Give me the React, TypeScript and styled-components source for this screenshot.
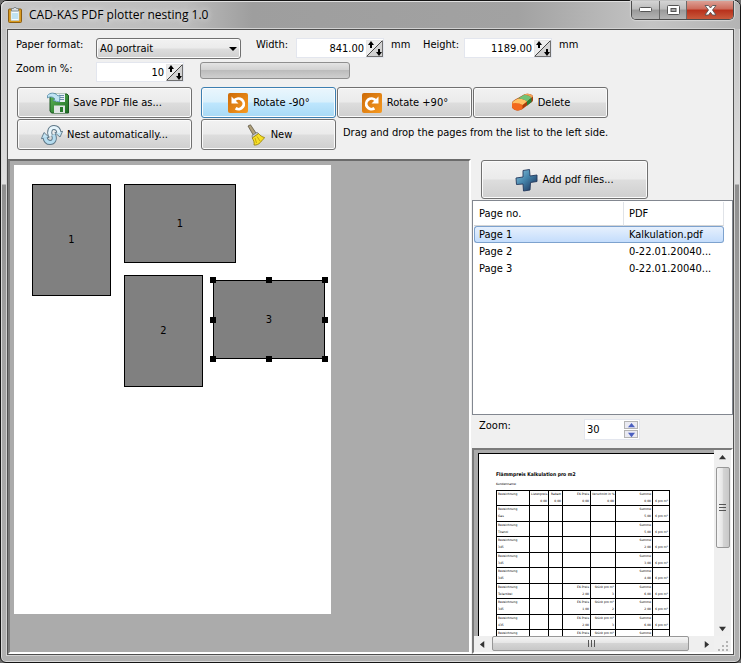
import React from "react";
import styled, { createGlobalStyle, css } from "styled-components";

const GlobalStyle = createGlobalStyle`
  * { box-sizing: border-box; }
  html, body, #root { height: 100%; margin: 0; }
  body { background: #6f6f6f; overflow: hidden; }
  body, button, input, select, table {
    font-family: "DejaVu Sans Condensed", "Noto Sans", sans-serif;
    font-size: 11px;
    line-height: 14px;
    color: #000;
  }
  button { padding: 0; margin: 0; }
`;

const Frame = styled.div`
  height: 100vh;
  min-height: 480px;
  display: flex;
  flex-direction: column;
  border: 1px solid #151515;
  border-radius: 7px 7px 6px 6px;
  padding: 0 6px 7px;
  background:
    linear-gradient(#bdbdbd, #e0e0e0 183px, #8f8f8f 184px, #a2a2a2 50%, #b0b0b0 100%);
  box-shadow: inset 0 0 0 1px #d8d8d8;
`;

const TitleBar = styled.header`
  display: flex;
  align-items: flex-start;
  height: 28px;
  margin: 0 -6px;
  padding-left: 6px;
  border-radius: 6px 6px 0 0;
  background: linear-gradient(90deg, #c6c6c6, #bcbcbc 25%, #9e9e9e 34%, #a2a2a2 70%, #c4c4c4 88%, #b4b4b4);
  box-shadow: inset 1px 1px 0 #e0e0e0;
`;

const Title = styled.h1`
  flex: 1;
  margin: 6px 0 0 6px;
  font: 12px/16px "Open Sans", "Noto Sans", sans-serif;
  text-shadow: 0 0 6px #fff;
`;

const TitleIcon = styled.svg`
  width: 16px;
  height: 16px;
  margin-top: 6px;
`;

const WindowButtons = styled.div`
  display: flex;
  height: 19px;
  margin-right: 6px;
  border: 1px solid #4c4c4c;
  border-top: 0;
  border-radius: 0 0 5px 5px;
  overflow: hidden;
  box-shadow: 0 0 1px 1px #d6d6d6;
`;

const WindowButton = styled.button<{ $close?: boolean }>`
  width: ${(p) => (p.$close ? 47 : 27)}px;
  display: grid;
  place-items: center;
  border: 0;
  background: ${(p) =>
    p.$close
      ? "linear-gradient(#dca095, #cd6a5a 45%, #b8301b 50%, #c95a3c)"
      : "linear-gradient(#d4d4d4, #bcbcbc 45%, #9a9a9a 50%, #b4b4b4)"};
  & + & { border-left: 1px solid #6a6a6a; }
`;

const Client = styled.main`
  flex: 1;
  min-height: 0;
  display: flex;
  flex-direction: column;
  border: 1px solid #4f4f4f;
  outline: 1px solid #d2d2d2;
  background: #f0f0f0;
`;

const Toolbar = styled.section`
  display: flex;
  flex-direction: column;
  padding: 8px 8px 9px;
`;

const FormRow = styled.div`
  display: flex;
  align-items: flex-start;
  height: 24px;
`;

const Label = styled.label<{ $width: number }>`
  flex: none;
  width: ${(p) => p.$width}px;
  white-space: nowrap;
`;

const Unit = styled.span`
  width: 39px;
  padding-left: 7px;
`;

const bevel = css`
  border: 1px solid #707070;
  border-radius: 3px;
  box-shadow: inset 0 0 0 1px #fbfbfb;
  background: linear-gradient(#f2f2f2, #ebebeb 48%, #dddddd 52%, #cfcfcf);
`;

const SelectWrap = styled.span`
  position: relative;
  width: 145px;
  margin-right: 15px;
  svg {
    position: absolute;
    right: 4px;
    top: 9px;
    pointer-events: none;
  }
`;

const Select = styled.select`
  ${bevel}
  appearance: none;
  display: block;
  width: 100%;
  height: 21px;
  padding: 1px 3px 0;
`;

const SpinField = styled.span`
  display: flex;
  align-items: center;
  width: 88px;
  height: 20px;
  border: 1px solid #e3e6ee;
  background: #fff;
`;

const SpinInput = styled.input`
  flex: 1;
  min-width: 0;
  height: 18px;
  padding: 0 2px;
  border: 0;
  outline: 0;
  background: transparent;
  text-align: right;
`;

const DiagonalSpin = styled.span`
  display: flex;
  width: 17px;
  height: 17px;
  border: 1px solid;
  border-color: #e6e6e6 #707070 #707070 #e6e6e6;
  background: linear-gradient(135deg, #ececec 48%, #444 48%, #444 53%, #d2d2d2 53%);
`;

const SpinArrow = styled.button<{ $down?: boolean }>`
  width: 8px;
  height: 15px;
  display: flex;
  justify-content: center;
  align-items: ${(p) => (p.$down ? "flex-end" : "flex-start")};
  border: 0;
  background: transparent;
`;

const Progress = styled.div`
  width: 150px;
  height: 17px;
  margin: 0 0 0 16px;
  border: 1px solid #8f8f8f;
  border-radius: 3px;
  background: linear-gradient(#e4e4e4, #d2d2d2 45%, #bcbcbc 50%, #cfcfcf);
`;

const ButtonRow = styled.div`
  display: flex;
  gap: 1px;
  padding-left: 1px;
  margin-top: 1px;
`;

const PushButton = styled.button<{ $wide?: boolean; $hot?: boolean }>`
  ${bevel}
  display: flex;
  align-items: center;
  justify-content: center;
  gap: 4px;
  flex: none;
  width: ${(p) => (p.$wide ? 175 : 135)}px;
  height: 31px;
  margin-right: ${(p) => (p.$wide ? 8 : 0)}px;
  ${(p) =>
    p.$hot &&
    css`
      border-color: #3c7fb1;
      background: linear-gradient(#eaf6fd, #d9f0fc 48%, #bee6fd 52%, #a7d9f5);
    `}
  svg { flex: none; }
`;

const AddButton = styled(PushButton)`
  width: 167px;
  height: 39px;
  margin: 1px 0 1px 9px;
`;

const Hint = styled.p`
  margin: 7px 0 0 6px;
`;

const Workspace = styled.div`
  flex: 1;
  min-height: 0;
  display: grid;
  grid-template-columns: minmax(0, 1fr) 262px;
`;

const Canvas = styled.section`
  overflow: hidden;
  padding: 4px;
  border: 2px solid;
  border-color: #6b6b6b #fff #fff #7b7b7b;
  background: #ababab;
`;

const Paper = styled.div`
  position: relative;
  width: 317px;
  height: 449px;
  background: #fff;
`;

const Sheet = styled.div<{ $x: number; $y: number; $landscape?: boolean }>`
  position: absolute;
  left: ${(p) => p.$x}px;
  top: ${(p) => p.$y}px;
  width: ${(p) => (p.$landscape ? 112 : 79)}px;
  height: ${(p) => (p.$landscape ? 79 : 112)}px;
  display: grid;
  place-items: center;
  box-shadow: inset 0 0 0 1px #000;
  background: #808080;
`;

const Handle = styled.span<{ $x: number; $y: number }>`
  position: absolute;
  left: ${(p) => p.$x}%;
  top: ${(p) => p.$y}%;
  width: 6px;
  height: 6px;
  margin: -3px;
  background: #000;
`;

const Side = styled.aside`
  display: flex;
  flex-direction: column;
  min-height: 0;
  padding-left: 1px;
`;

const ListBox = styled.div`
  flex: 215 1 0;
  min-height: 0;
  overflow: hidden;
  padding: 1px;
  border: 1px solid #828790;
  background: #fff;
`;

const PageTable = styled.table`
  width: 250px;
  table-layout: fixed;
  border-collapse: separate;
  border-spacing: 0;
  th, td {
    padding: 0 5px;
    text-align: left;
    font-weight: normal;
    white-space: nowrap;
  }
  th {
    height: 24px;
    border-right: 1px solid #e0e3e8;
    border-bottom: 1px solid #d5d5d5;
  }
  td { height: 17px; }
`;

const PageRow = styled.tr<{ $selected?: boolean }>`
  ${(p) =>
    p.$selected &&
    css`
      td {
        border: 1px solid #7da2ce;
        border-width: 1px 0;
        background: linear-gradient(#e6f0fd, #c4ddfc);
      }
      td:first-child { border-left-width: 1px; border-radius: 3px 0 0 3px; padding-left: 4px; }
      td:last-child { border-right-width: 1px; border-radius: 0 3px 3px 0; }
    `}
`;

const ZoomRow = styled.div`
  display: flex;
  height: 33px;
  padding: 4px 7px;
`;

const SmallSpin = styled.span`
  display: flex;
  align-items: center;
  width: 56px;
  height: 21px;
  margin-left: 1px;
  border: 1px solid #e3e6ee;
  background: #fff;
`;

const SmallSpinInput = styled(SpinInput)`
  text-align: left;
`;

const SpinStack = styled.span`
  display: grid;
  gap: 1px;
  margin-right: 1px;
`;

const StackButton = styled.button`
  width: 14px;
  height: 8px;
  display: grid;
  place-items: center;
  border: 1px solid #b4b4b4;
  background: #eaeaf2;
`;

const Preview = styled.section`
  flex: 206 1 0;
  min-height: 0;
  overflow: hidden;
  display: grid;
  grid-template-columns: minmax(0, 1fr) 17px;
  grid-template-rows: minmax(0, 1fr) 16px;
  border: 2px solid;
  border-color: #7b7b7b #fff #fff #7b7b7b;
  background: #f0f0f0;
`;

const PreviewView = styled.div`
  overflow: hidden;
  padding: 3px 0 0 4px;
  background: #ababab;
`;

const PreviewPage = styled.article`
  height: 400px;
  padding: 16px 0 0 17px;
  border: solid #000;
  border-width: 1px 0 0 1px;
  background: #fff;
  h2 {
    margin: 0;
    font: bold 5px/8px "DejaVu Sans Condensed", sans-serif;
  }
  p {
    margin: 3px 0 2px;
    font: 3px/7px "DejaVu Sans", sans-serif;
  }
`;

const Calc = styled.table`
  width: 173px;
  table-layout: fixed;
  border-collapse: collapse;
  td {
    height: 15px;
    padding: 0 1px;
    border: 1px solid #000;
    font: 3px/7px "DejaVu Sans", sans-serif;
    text-align: right;
    white-space: pre;
    vertical-align: top;
  }
  tr:nth-child(even) td { height: 16px; }
  td:first-child { text-align: left; }
`;

const Bar = styled.div<{ $horizontal?: boolean }>`
  display: flex;
  flex-direction: ${(p) => (p.$horizontal ? "row" : "column")};
  min-width: 0;
  min-height: 0;
  background: #efefef;
`;

const BarArrow = styled.button`
  flex: none;
  width: 16px;
  height: 16px;
  display: grid;
  place-items: center;
  border: 0;
  background: transparent;
`;

const Thumb = styled.div<{ $horizontal?: boolean }>`
  display: grid;
  place-items: center;
  border: 1px solid #979797;
  border-radius: 2px;
  ${(p) =>
    p.$horizontal
      ? css`
          flex: 0 1 197px;
          margin: 0 0 1px 2px;
          background: linear-gradient(#f5f5f5, #e6e6e6 45%, #d4d4d4 50%, #c8c8c8);
        `
      : css`
          flex: 0 1 81px;
          margin: 1px 1px 0 2px;
          background: linear-gradient(90deg, #f5f5f5, #e6e6e6 45%, #d4d4d4 50%, #c8c8c8);
        `}
`;

const BarGap = styled.div`
  flex: 1;
`;

const Grip = () => (
  <svg width="18" height="16" viewBox="0 0 18 16" aria-hidden="true">
    <path fill="#b4b4b4" d="M12 5h2v2h-2zM8 9h2v2H8zM12 9h2v2h-2zM4 13h2v2H4zM8 13h2v2H8zM12 13h2v2h-2z" />
  </svg>
);

const Arrow = ({ dir, color = "#333" }: { dir: "up" | "down" | "left" | "right"; color?: string }) => {
  const d = {
    up: "M0 6 4 1l4 5z",
    down: "M0 2h8L4 7z",
    left: "M6 0v8L1 4z",
    right: "M2 0v8l5-4z",
  }[dir];
  return (
    <svg width="7" height="7" viewBox="0 0 8 8" aria-hidden="true">
      <path d={d} fill={color} />
    </svg>
  );
};

const SolidArrow = ({ down }: { down?: boolean }) => (
  <svg width="8" height="8" viewBox="0 0 8 8" aria-hidden="true">
    <path d={down ? "M3 1h2v3h2L4 8 1 4h2z" : "M3 7h2V4h2L4 0 1 4h2z"} />
  </svg>
);

const ClipboardIcon = () => (
  <TitleIcon viewBox="0 0 16 16" aria-hidden="true">
    <rect x="1.500" y="2" width="13" height="13.500" rx="1" fill="#d99a1e" stroke="#8a5d12" />
    <path d="M4 4h8v9.500H4z" fill="#f4fbff" stroke="#b6c8d2" strokeWidth=".6" />
    <path d="M5 6h6v6H5z" fill="#bfe2f3" />
    <path d="M4.500 1.500h2l.5-1h2l.5 1h2V4h-7z" fill="#d8dde0" stroke="#68737a" strokeWidth=".7" />
  </TitleIcon>
);

const SaveIcon = () => (
  <svg width="22" height="22" viewBox="0 0 22 22" aria-hidden="true">
    <defs>
      <linearGradient id="disk" x1="0" y1="0" x2="1" y2="1">
        <stop offset="0" stopColor="#5fb65a" />
        <stop offset="1" stopColor="#1c6d20" />
      </linearGradient>
    </defs>
    <path d="M3 2h17l1.500 1.500V21H4.500L3 19z" fill="url(#disk)" stroke="#1b5720" />
    <path d="M9 1.500h9V10H9z" fill="#e9f1f6" />
    <path d="M12 3.500h5M12 5.500h5M12 7.500h5" stroke="#6e8ea8" />
    <path d="M7 13.500h11V21H7z" fill="#dfe5e4" />
    <path d="M13 15h3v5h-3z" fill="#277a2b" />
    <path d="M.5 3.500C3 .3 8 .2 11 4l2-1-.5 7L6 8.500 8 7C6 4.800 3 4.200.5 6z" fill="#bfe3f2" stroke="#4f87a4" strokeWidth=".8" />
  </svg>
);

const RefreshIcon = () => (
  <svg width="22" height="22" viewBox="0 0 22 22" aria-hidden="true">
    <g fill="none" stroke="#5d7686" strokeWidth="5">
      <path d="M9.500 12C7.500 7 9.500 3.500 13 3.500c3 0 4.500 2 5 5" />
      <path d="M12.500 10.500c2 5 0 8-3.500 8-3 0-4.500-2-5-5" />
    </g>
    <g fill="#c3e4f3" stroke="#5d7686" strokeWidth=".9" strokeLinejoin="round">
      <path d="M13.800 8.600 21.600 7.300 19 13z" />
      <path d="M8.200 13.400.4 14.700 3 8.500z" />
    </g>
    <g fill="none" strokeWidth="3.200">
      <path d="M9.500 12C7.500 7 9.500 3.500 13 3.500c3 0 4.500 2 5 5.500" stroke="#e6f5fc" />
      <path d="M12.500 10.500c2 5 0 8-3.500 8-3 0-4.500-2-5-5.500" stroke="#b5dcef" />
    </g>
  </svg>
);

const RotateIcon = ({ clockwise }: { clockwise?: boolean }) => (
  <svg width="22" height="22" viewBox="0 0 22 22" aria-hidden="true">
    <defs>
      <linearGradient id="orange" x1="0" y1="0" x2="1" y2="1">
        <stop offset="0" stopColor="#cc6a08" />
        <stop offset="1" stopColor="#f79a20" />
      </linearGradient>
    </defs>
    <rect x="1" y="1" width="20" height="20" rx="2" fill="url(#orange)" />
    <g transform={clockwise ? "translate(22 0) scale(-1 1)" : undefined}>
      <path d="M7.500 8.300A5.300 5.300 0 1 1 8.600 16.300" fill="none" stroke="#fff" strokeWidth="2.800" />
      <path d="M4.500 4.500v7H11.500z" fill="#fff" />
    </g>
  </svg>
);

const BroomIcon = () => (
  <svg width="22" height="22" viewBox="0 0 22 22" aria-hidden="true">
    <path d="M3 2 5.500.8l6 9-3 1.700z" fill="#b0a17c" stroke="#5f5844" strokeWidth=".8" />
    <path d="M7 11.500 12 8.300l2 1.700-6.500 4.500z" fill="#c9ccd0" stroke="#666a70" strokeWidth=".7" />
    <path d="m7.200 14 6.300-4.500c1.500 2 4 3.600 6 4-1 2-2.500 2.600-4 4.800-2 2.200-4 3-6.500 2.700.7-2-.5-5-1.800-7z" fill="#f7df25" stroke="#9a830b" strokeWidth=".9" />
    <path d="m10 14 1.500 5M12 12.500l3 4.500" stroke="#c5a60f" fill="none" />
  </svg>
);

const EraserIcon = () => (
  <svg width="23" height="22" viewBox="0 0 23 22" aria-hidden="true">
    <path d="M1 11.500C1 9 4 7.500 7 6l6-3.500C16 1 21.500 2 22 4.500V8c0 1.500-1 2-3 3.300L11.500 17C8 19.500 2 18.500 1 15z" fill="#a83d0c" />
    <path d="M1 11.500c2-1.500 8-.5 10.500 1.500v4C8 19.500 2 18.500 1 15z" fill="#f2691d" />
    <path d="M1 11.500C1.500 9.500 4 8 7 6.500c3 0 7 .8 9 3L11.500 13C9 11 3.500 10.300 1 11.500z" fill="#ffc164" />
    <path d="m7 6.500 6-3.800c3 0 6 1 7.500 3L16 9.500c-2-2-6-3-9-3z" fill="#72c275" />
    <path d="M16 9.500 20.500 5.700V10L16 13.700z" fill="#25823b" />
    <path d="M13 2.700C16 1 21 2 22 4.500l-1.500 1.200c-1.500-2-4.500-3-7.500-3z" fill="#f0a45a" />
  </svg>
);

const PlusIcon = () => (
  <svg width="23" height="24" viewBox="0 0 23 24" aria-hidden="true">
    <defs>
      <linearGradient id="plus" x1="0" y1="0" x2="1" y2="1">
        <stop offset="0" stopColor="#8fc7df" />
        <stop offset=".45" stopColor="#4585ac" />
        <stop offset="1" stopColor="#14254d" />
      </linearGradient>
    </defs>
    <path d="M8 2.500 14.500 1.500 15 8l7-1v6.500l-6.500 1L15 22l-6.500 1L8 16l-6.500.5L1 10l7-1z" fill="url(#plus)" stroke="#24395c" strokeWidth=".9" />
  </svg>
);

const Spin = ({ id, value }: { id: string; value: string }) => (
  <SpinField>
    <SpinInput id={id} defaultValue={value} />
    <DiagonalSpin>
      <SpinArrow aria-label="Increase"><SolidArrow /></SpinArrow>
      <SpinArrow $down aria-label="Decrease"><SolidArrow down /></SpinArrow>
    </DiagonalSpin>
  </SpinField>
);

const calcRows: string[][] = [
  ["Bezeichnung", "Listenpreis\n0,00", "Rabatt\n0,00", "EK Preis\n0,00", "Verschnitt in %\n0,00", "Summe\n0,00", "\n€ pro m²"],
  ["Bezeichnung\nGas", "", "", "", "", "Summe\n5,00", "\n€ pro m²"],
  ["Bezeichnung\nTitanol", "", "", "", "", "Summe\n5,00", "\n€ pro m²"],
  ["Bezeichnung\n345", "", "", "", "", "Summe\n2,00", "\n€ pro m²"],
  ["Bezeichnung\n345", "", "", "", "", "Summe\n3,00", "\n€ pro m²"],
  ["Bezeichnung\n345", "", "", "", "", "Summe\n4,00", "\n€ pro m²"],
  ["Bezeichnung\nTeilartikel", "", "", "EK Preis\n2,00", "Stück pro m²\n3", "Summe\n6,00", "\n€ pro m²"],
  ["Bezeichnung\n345", "", "", "EK Preis\n1,00", "Stück pro m²\n2", "Summe\n2,00", "\n€ pro m²"],
  ["Bezeichnung\n435", "", "", "EK Preis\n2,00", "Stück pro m²\n3", "Summe\n6,00", "\n€ pro m²"],
  ["Bezeichnung", "", "", "EK Preis", "Stück pro m²", "Summe", ""],
];

const calcWidths = [33, 19, 14, 28, 25, 37, 17];

const pages = [
  ["Page 1", "Kalkulation.pdf"],
  ["Page 2", "0-22.01.20040..."],
  ["Page 3", "0-22.01.20040..."],
];

const handles = [[0, 0], [50, 0], [100, 0], [0, 50], [100, 50], [0, 100], [50, 100], [100, 100]];

export default function App() {
  return (
    <>
      <GlobalStyle />
      <Frame>
        <TitleBar>
          <ClipboardIcon />
          <Title>CAD-KAS PDF plotter nesting 1.0</Title>
          <WindowButtons>
            <WindowButton aria-label="Minimize">
              <svg width="13" height="6" viewBox="0 0 13 6"><rect x=".5" y=".5" width="12" height="4" rx="1" fill="#fff" stroke="#555" /></svg>
            </WindowButton>
            <WindowButton aria-label="Maximize">
              <svg width="13" height="11" viewBox="0 0 13 11">
                <rect x=".5" y=".5" width="12" height="9" rx="1" fill="#fff" stroke="#555" />
                <rect x="4" y="3.500" width="5" height="3" fill="#aaa" stroke="#555" />
              </svg>
            </WindowButton>
            <WindowButton $close aria-label="Close">
              <svg width="13" height="11" viewBox="0 0 13 11">
                <path d="m1 .5h3.500l2 2.500 2-2.500H12L8.500 5l3.500 5H8.500l-2-2.700L4.500 10H1l3.500-5z" fill="#fff" stroke="#555" strokeWidth=".9" />
              </svg>
            </WindowButton>
          </WindowButtons>
        </TitleBar>
        <Client>
          <Toolbar>
            <FormRow>
              <Label $width={80} htmlFor="format">Paper format:</Label>
              <SelectWrap>
                <Select id="format" defaultValue="A0 portrait">
                  <option>A0 portrait</option>
                </Select>
                <svg width="8" height="4" viewBox="0 0 8 4" aria-hidden="true"><path d="M0 0h8L4 4z" /></svg>
              </SelectWrap>
              <Label $width={40} htmlFor="width">Width:</Label>
              <Spin id="width" value="841.00" />
              <Unit>mm</Unit>
              <Label $width={41} htmlFor="height">Height:</Label>
              <Spin id="height" value="1189.00" />
              <Unit>mm</Unit>
            </FormRow>
            <FormRow>
              <Label $width={80} htmlFor="zoom">Zoom in %:</Label>
              <Spin id="zoom" value="10" />
              <Progress role="progressbar" aria-label="Progress" aria-valuenow={0} />
            </FormRow>
            <ButtonRow>
              <PushButton $wide><SaveIcon />Save PDF file as...</PushButton>
              <PushButton $hot><RotateIcon />Rotate -90°</PushButton>
              <PushButton><RotateIcon clockwise />Rotate +90°</PushButton>
              <PushButton><EraserIcon />Delete</PushButton>
            </ButtonRow>
            <ButtonRow>
              <PushButton $wide><RefreshIcon />Nest automatically...</PushButton>
              <PushButton><BroomIcon />New</PushButton>
              <Hint>Drag and drop the pages from the list to the left side.</Hint>
            </ButtonRow>
          </Toolbar>
          <Workspace>
            <Canvas aria-label="Layout">
              <Paper>
                <Sheet $x={18} $y={19}>1</Sheet>
                <Sheet $x={110} $y={19} $landscape>1</Sheet>
                <Sheet $x={110} $y={110}>2</Sheet>
                <Sheet $x={199} $y={115} $landscape>
                  3
                  {handles.map(([x, y]) => <Handle key={`${x}-${y}`} $x={x} $y={y} />)}
                </Sheet>
              </Paper>
            </Canvas>
            <Side>
              <AddButton><PlusIcon />Add pdf files...</AddButton>
              <ListBox>
                <PageTable>
                  <colgroup><col width="150" /><col /></colgroup>
                  <thead><tr><th>Page no.</th><th>PDF</th></tr></thead>
                  <tbody>
                    {pages.map(([name, file], i) => (
                      <PageRow key={name} $selected={i === 0}><td>{name}</td><td>{file}</td></PageRow>
                    ))}
                  </tbody>
                </PageTable>
              </ListBox>
              <ZoomRow>
                <Label $width={104} htmlFor="preview-zoom">Zoom:</Label>
                <SmallSpin>
                  <SmallSpinInput id="preview-zoom" defaultValue="30" />
                  <SpinStack>
                    <StackButton aria-label="Zoom in"><Arrow dir="up" color="#4a5fc0" /></StackButton>
                    <StackButton aria-label="Zoom out"><Arrow dir="down" color="#4a5fc0" /></StackButton>
                  </SpinStack>
                </SmallSpin>
              </ZoomRow>
              <Preview aria-label="Preview">
                <PreviewView>
                  <PreviewPage>
                    <h2>Flämmpreis Kalkulation pro m2</h2>
                    <p>Kundenname:</p>
                    <Calc>
                      <colgroup>{calcWidths.map((w, i) => <col key={i} width={w} />)}</colgroup>
                      <tbody>
                        {calcRows.map((row, i) => (
                          <tr key={i}>
                            {row.map((cell, j) => <td key={j}>{cell}</td>)}
                          </tr>
                        ))}
                      </tbody>
                    </Calc>
                  </PreviewPage>
                </PreviewView>
                <Bar>
                  <BarArrow aria-label="Scroll up"><Arrow dir="up" /></BarArrow>
                  <Thumb>
                    <svg width="8" height="8" viewBox="0 0 8 8"><path d="M0 1.500h7M0 4.500h7M0 7.500h7" stroke="#555" /></svg>
                  </Thumb>
                  <BarGap />
                  <BarArrow aria-label="Scroll down"><Arrow dir="down" /></BarArrow>
                </Bar>
                <Bar $horizontal>
                  <BarArrow aria-label="Scroll left"><Arrow dir="left" /></BarArrow>
                  <Thumb $horizontal>
                    <svg width="8" height="8" viewBox="0 0 8 8"><path d="M1.500 0v7M4.500 0v7M7.500 0v7" stroke="#555" /></svg>
                  </Thumb>
                  <BarGap />
                  <BarArrow aria-label="Scroll right"><Arrow dir="right" /></BarArrow>
                </Bar>
                <Grip />
              </Preview>
            </Side>
          </Workspace>
        </Client>
      </Frame>
    </>
  );
}
